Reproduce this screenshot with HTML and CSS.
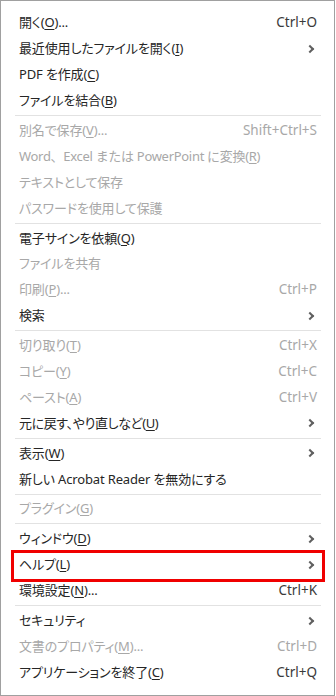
FILE: index.html
```html
<!DOCTYPE html>
<html lang="ja">
<head>
<meta charset="utf-8">
<title>Menu</title>
<link rel="stylesheet" href="styles.css">
</head>
<body>
<div class="menu">
  <div class="item"><span class="label">開く(<u>O</u>)...</span><span class="key">Ctrl+O</span></div>
  <div class="item"><span class="label">最近使用したファイルを開く(<u>I</u>)</span><span class="chev"></span></div>
  <div class="item"><span class="label">PDF を作成(<u>C</u>)</span></div>
  <div class="item"><span class="label">ファイルを結合(<u>B</u>)</span></div>
  <div class="sep"></div>
  <div class="item off"><span class="label">別名で保存(<u>V</u>)...</span><span class="key">Shift+Ctrl+S</span></div>
  <div class="item off"><span class="label wide">Word、Excel または PowerPoint に変換(<u>R</u>)</span></div>
  <div class="item off"><span class="label">テキストとして保存</span></div>
  <div class="item off"><span class="label">パスワードを使用して保護</span></div>
  <div class="sep"></div>
  <div class="item"><span class="label">電子サインを依頼(<u>Q</u>)</span></div>
  <div class="item off"><span class="label">ファイルを共有</span></div>
  <div class="item off"><span class="label">印刷(<u>P</u>)...</span><span class="key">Ctrl+P</span></div>
  <div class="item"><span class="label">検索</span><span class="chev"></span></div>
  <div class="sep"></div>
  <div class="item off"><span class="label">切り取り(<u>T</u>)</span><span class="key">Ctrl+X</span></div>
  <div class="item off"><span class="label">コピー(<u>Y</u>)</span><span class="key">Ctrl+C</span></div>
  <div class="item off"><span class="label">ペースト(<u>A</u>)</span><span class="key">Ctrl+V</span></div>
  <div class="item"><span class="label tight">元に戻す、やり直しなど(<u>U</u>)</span><span class="chev"></span></div>
  <div class="sep"></div>
  <div class="item"><span class="label">表示(<u>W</u>)</span><span class="chev"></span></div>
  <div class="item"><span class="label">新しい Acrobat Reader を無効にする</span></div>
  <div class="sep"></div>
  <div class="item off"><span class="label">プラグイン(<u>G</u>)</span></div>
  <div class="sep"></div>
  <div class="item"><span class="label">ウィンドウ(<u>D</u>)</span><span class="chev"></span></div>
  <div class="item marked"><span class="label">ヘルプ(<u>L</u>)</span><span class="chev"></span></div>
  <div class="item"><span class="label">環境設定(<u>N</u>)...</span><span class="key">Ctrl+K</span></div>
  <div class="sep"></div>
  <div class="item"><span class="label">セキュリティ</span><span class="chev"></span></div>
  <div class="item off"><span class="label">文書のプロパティ(<u>M</u>)...</span><span class="key">Ctrl+D</span></div>
  <div class="item"><span class="label">アプリケーションを終了(<u>C</u>)</span><span class="key">Ctrl+Q</span></div>
</div>
</body>
</html>
```

FILE: styles.css
```css
html, body {
  margin: 0;
  padding: 0;
  background: #ffffff;
}

.menu {
  box-sizing: border-box;
  width: 335px;
  height: 696px;
  border: 1px solid #a0a0a0;
  padding-top: 9px;
  background: #ffffff;
  font-family: "Noto Sans", "Noto Sans CJK JP", sans-serif;
  font-size: 13.5px;
  color: #262626;
}

.item {
  position: relative;
  display: flex;
  align-items: center;
  justify-content: space-between;
  height: 25.9px;
  padding: 0 17px 0 18px;
  line-height: 1;
  white-space: nowrap;
}

.label {
  font-size: 13px;
  letter-spacing: -0.15px;
  font-feature-settings: "palt";
}

.label.wide {
  font-feature-settings: normal;
  letter-spacing: -0.3px;
}

.label.tight {
  letter-spacing: -0.4px;
}

.label u {
  text-decoration: underline;
  text-decoration-thickness: 1px;
  text-underline-offset: 2px;
}

.key {
  color: #3a3a3a;
}

.off .label,
.off .key {
  color: #a8a8a8;
}

.chev {
  width: 4px;
  height: 4px;
  margin-right: 4px;
  border-top: 2px solid #606060;
  border-right: 2px solid #606060;
  transform: rotate(45deg);
}

.sep {
  height: 1px;
  margin: 1.5px 13px 1.5px 14px;
  background: #e2e2e2;
}

.marked::after {
  content: "";
  position: absolute;
  left: 10px;
  right: 9px;
  top: -2px;
  bottom: -4px;
  border: 3px solid #f00000;
}
```
